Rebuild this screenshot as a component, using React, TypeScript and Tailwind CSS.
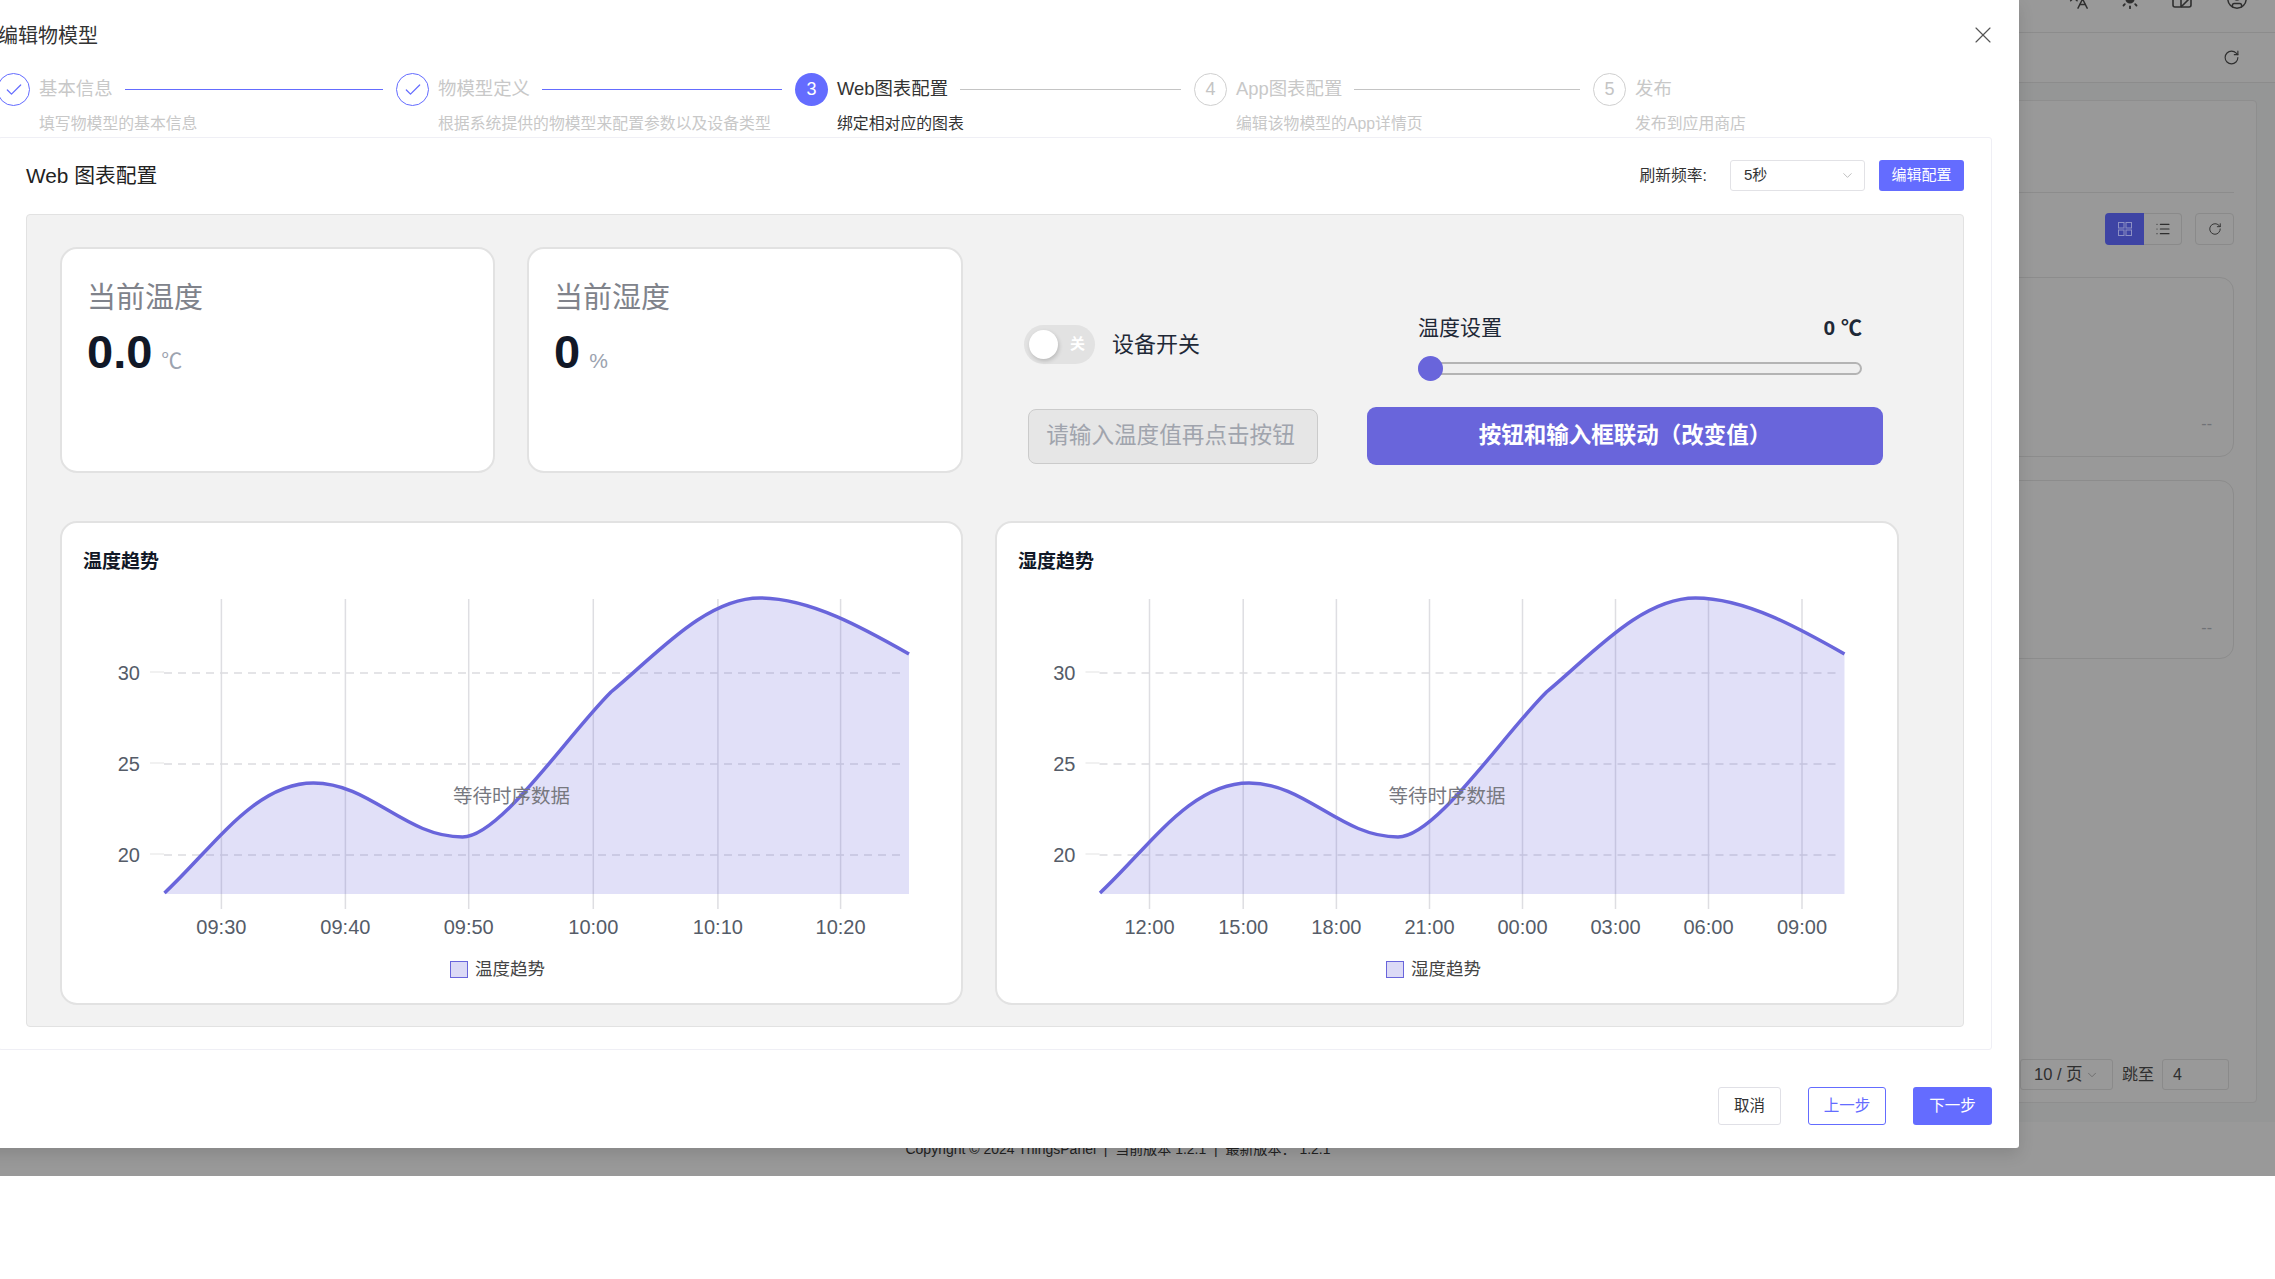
import { Check, ChevronDown, CircleUser, Languages, List, RotateCw, Sun, X } from "lucide-react"

const CURVE =
  "M103.5 370C153.5 323 194 260 252.5 260C309 260 344 314 401.5 314C439 314 505 214 550 169C594 133 644 75 699 75C749 75 804 106 848 131"

const steps = [
  { no: 1, title: "基本信息", desc: "填写物模型的基本信息", state: "done" },
  { no: 2, title: "物模型定义", desc: "根据系统提供的物模型来配置参数以及设备类型", state: "done" },
  { no: 3, title: "Web图表配置", desc: "绑定相对应的图表", state: "active" },
  { no: 4, title: "App图表配置", desc: "编辑该物模型的App详情页", state: "todo" },
  { no: 5, title: "发布", desc: "发布到应用商店", state: "todo" },
]

function Step({ step, last }: { step: (typeof steps)[number]; last: boolean }) {
  const done = step.state === "done"
  const active = step.state === "active"
  return (
    <div className="w-[399px] shrink-0">
      <div className="flex items-center h-[33px]">
        <div
          className={
            active
              ? "w-[33px] h-[33px] rounded-full bg-[#646cff] text-white flex items-center justify-center text-[18px] shrink-0"
              : done
                ? "w-[33px] h-[33px] rounded-full border border-[#646cff] text-[#646cff] flex items-center justify-center shrink-0"
                : "w-[33px] h-[33px] rounded-full border-[1.5px] border-[#cfcfcf] text-[#c4c4c4] flex items-center justify-center text-[18px] shrink-0"
          }
        >
          {done ? <Check size={20} strokeWidth={1.5} /> : step.no}
        </div>
        <div className={active ? "ml-[9px] -mt-[1px] text-[18.4px] text-[#333] whitespace-nowrap" : "ml-[9px] -mt-[1px] text-[18.4px] text-[#c8c8c8] whitespace-nowrap"}>
          {step.title}
        </div>
        {!last && (
          <div className={done ? "flex-1 h-[1.5px] ml-[12px] mr-[13px] bg-[#646cff]" : "flex-1 h-[1.5px] ml-[12px] mr-[13px] bg-[#c4c4c4]"} />
        )}
      </div>
      <div className={active ? "mt-[6px] pl-[42px] text-[15.85px] leading-[24px] text-[#333] whitespace-nowrap" : "mt-[6px] pl-[42px] text-[15.85px] leading-[24px] text-[#c8c8c8] whitespace-nowrap"}>
        {step.desc}
      </div>
    </div>
  )
}

function StatCard({ title, value, unit, className }: { title: string; value: string; unit: string; className: string }) {
  return (
    <div className={"h-[226px] shrink-0 bg-white rounded-[17px] border-2 border-[#e2e2e2] pl-[25px] pt-[29px] " + className}>
      <div className="text-[29px] leading-[40px] text-[#80838b]">{title}</div>
      <div className="mt-[6px] flex items-baseline">
        <span className="text-[47px] leading-[56px] font-bold text-[#111827]">{value}</span>
        <span className="ml-[9px] text-[21px] text-[#9ca3af]">{unit}</span>
      </div>
    </div>
  )
}

function ChartCard({
  title,
  ticks,
  className,
  legendPad,
}: {
  title: string
  ticks: { x: number; label: string }[]
  className: string
  legendPad: string
}) {
  return (
    <div className={"relative h-[484px] bg-white rounded-[17px] border-2 border-[#e2e2e2] pt-[26px] " + className}>
      <div className="pl-[21px] text-[19px] leading-[26px] font-bold text-[#111827]">{title}</div>
      <svg viewBox="1 52 899 378" className="block w-full h-[378px]">
        {ticks.map((t) => (
          <line key={t.label} x1={t.x} x2={t.x} y1={76} y2={386} stroke="#dedee2" strokeWidth={1.5} />
        ))}
        {[
          { y: 150, label: "30" },
          { y: 241, label: "25" },
          { y: 332, label: "20" },
        ].map((g) => (
          <g key={g.label}>
            <line x1={89} x2={103} y1={g.y - 1} y2={g.y - 1} stroke="#ececec" strokeWidth={1.5} />
            <line x1={103} x2={843} y1={g.y} y2={g.y} stroke="#dcdcdf" strokeWidth={1.5} strokeDasharray="8 6" />
            <text x={79} y={g.y + 7} textAnchor="end" fontSize={20} fill="#555c68">
              {g.label}
            </text>
          </g>
        ))}
        <path d={CURVE + "L848 371L103.5 371Z"} fill="#6965db" fillOpacity={0.2} />
        <path d={CURVE} fill="none" stroke="#6965db" strokeWidth={3.5} />
        {ticks.map((t) => (
          <text key={t.label} x={t.x} y={411} textAnchor="middle" fontSize={20} fill="#555c68">
            {t.label}
          </text>
        ))}
      </svg>
      <div className={"mt-[4px] flex items-center justify-center h-[24px] " + legendPad}>
        <div className="w-[18px] h-[17px] bg-[#dcdaf6] border-[1.5px] border-[#6965db]" />
        <span className="ml-[7px] text-[17.5px] text-[#444]">{title}</span>
      </div>
      <div className="absolute left-0 right-0 top-[259px] text-center text-[19.5px] leading-[28px] text-[#77787f]">等待时序数据</div>
    </div>
  )
}

function Backdrop() {
  return (
    <div className="h-[1176px] flex flex-col bg-[#999999] text-[#2f2f2f]">
      <div className="h-[33px] shrink-0 border-b border-[#8c8c8c] flex justify-end pr-[27px]">
        <div className="-mt-[12px] flex h-[22px]">
          <Languages size={22} strokeWidth={1.6} />
          <Sun size={22} strokeWidth={2} className="ml-[30px] fill-current" />
          <svg width="22" height="22" viewBox="0 0 22 22" fill="none" stroke="currentColor" strokeWidth="1.6" className="ml-[30px]">
            <rect x="2" y="2" width="18" height="17" rx="2" />
            <path d="M10 2V19M10 19L20 9" />
          </svg>
          <CircleUser size={22} strokeWidth={1.6} className="ml-[33px]" />
        </div>
      </div>
      <div className="h-[50px] shrink-0 border-b border-[#8c8c8c] flex items-center justify-end pr-[35px]">
        <RotateCw size={17} strokeWidth={1.6} />
      </div>
      <div className="flex-1 bg-[#959696] pt-[17px] pb-[19px] pl-[260px] pr-[18px]">
        <div className="h-full bg-[#999999] border border-[#8e8e8e] rounded-[4px] pt-[91px] pr-[22px] pb-[12px] flex flex-col">
          <div className="border-b border-[#8c8c8c]" />
          <div className="mt-[20px] flex justify-end">
            <div className="flex h-[32px]">
              <div className="w-[39px] bg-[#3e44a4] rounded-l-[4px] flex items-center justify-center">
                <svg width="14" height="14" viewBox="0 0 14 14" fill="none" stroke="#8d90c4" strokeWidth="1">
                  <rect x="0.5" y="0.5" width="5.5" height="5.5" />
                  <rect x="8" y="0.5" width="5.5" height="5.5" />
                  <rect x="0.5" y="8" width="5.5" height="5.5" />
                  <rect x="8" y="8" width="5.5" height="5.5" />
                </svg>
              </div>
              <div className="w-[38px] border border-l-0 border-[#8a8a8a] rounded-r-[4px] flex items-center justify-center">
                <List size={16} strokeWidth={1.7} />
              </div>
            </div>
            <div className="ml-[13px] w-[39px] h-[32px] border border-[#8a8a8a] rounded-[4px] flex items-center justify-center">
              <RotateCw size={14} strokeWidth={1.6} />
            </div>
          </div>
          <div className="mt-[32px] h-[180px] border border-[#8c8c8c] rounded-[14px] flex items-end justify-end pb-[20px] pr-[21px] text-[#707276] text-[16px] leading-[24px]">
            --
          </div>
          <div className="mt-[23px] h-[179px] border border-[#8c8c8c] rounded-[14px] flex items-end justify-end pb-[18px] pr-[21px] text-[#707276] text-[16px] leading-[24px]">
            --
          </div>
          <div className="mt-auto flex justify-end items-center text-[16px]">
            <div className="w-[93px] h-[31px] border border-[#8a8a8a] rounded-[3px] flex items-center pl-[13px] text-[16.5px]">
              10 / 页
              <ChevronDown size={14} strokeWidth={1.4} className="ml-[2px] text-[#666]" />
            </div>
            <span className="ml-[9px]">跳至</span>
            <div className="ml-[8px] mr-[5px] w-[67px] h-[31px] border border-[#8a8a8a] rounded-[3px] flex items-center pl-[10px]">4</div>
          </div>
        </div>
      </div>
      <div className="h-[54px] shrink-0 w-[2236px] flex items-center justify-center text-[14px] text-[#222]">
        Copyright © 2024 ThingsPanel&nbsp; |&nbsp; 当前版本 1.2.1&nbsp; |&nbsp; 最新版本： 1.2.1
      </div>
    </div>
  )
}

export default function App() {
  return (
    <div className="relative w-[2275px] h-[1279px] overflow-hidden bg-white font-['Liberation_Sans','Noto_Sans_CJK_SC',sans-serif]">
      <Backdrop />

      <div className="absolute left-[-26px] top-0 w-[2045px] h-[1148px] bg-white rounded-br-[3px] shadow-[0_6px_16px_rgba(0,0,0,0.12)] pl-[24px] pr-[27px] pt-[22px]">
        <div className="flex items-center justify-between h-[28px]">
          <div className="text-[20px] leading-[28px] text-[#333]">编辑物模型</div>
          <X size={28} strokeWidth={1} className="text-[#555] -mr-[5px] -mt-[2px]" />
        </div>

        <div className="mt-[23px] flex ml-[-1px]">
          {steps.map((s, i) => (
            <Step key={s.no} step={s} last={i === steps.length - 1} />
          ))}
        </div>

        <div className="mt-[1px] h-[913px] border border-[#efeff5] rounded-[3px] px-[27px] pt-[22px]">
          <div className="flex items-center justify-between h-[31px]">
            <div className="text-[20.8px] text-[#222]">Web 图表配置</div>
            <div className="flex items-center">
              <span className="text-[15.8px] text-[#333]">刷新频率:</span>
              <div className="ml-[23px] w-[135px] h-[31px] border-[1.5px] border-[#e2e2e6] rounded-[3px] flex items-center justify-between pl-[13px] pr-[9px] text-[15px] text-[#333]">
                5秒
                <ChevronDown size={15} strokeWidth={1.2} className="text-[#aaa]" />
              </div>
              <div className="ml-[14px] w-[85px] h-[31px] bg-[#646cff] rounded-[3px] flex items-center justify-center text-[15px] text-white">编辑配置</div>
            </div>
          </div>

          <div className="mt-[23px] h-[813px] bg-[#f2f2f2] border border-[#e2e2e2] rounded-[4px] pl-[33px] pt-[32px]">
            <div className="flex">
              <StatCard title="当前温度" value="0.0" unit="℃" className="w-[435px]" />
              <StatCard title="当前湿度" value="0" unit="%" className="ml-[32px] w-[436px]" />

              <div className="pl-[61px] pt-[66px]">
                <div className="flex items-start h-[68px]">
                  <div className="w-[394px] mt-[12px] flex items-center">
                    <div className="w-[71px] h-[39px] rounded-full bg-[#e2e2e2] flex items-center pl-[5px]">
                      <div className="w-[29px] h-[29px] rounded-full bg-white shadow-[1px_2px_4px_rgba(0,0,0,0.18)]" />
                      <span className="ml-[12px] text-[15px] font-bold text-white">关</span>
                    </div>
                    <span className="ml-[17px] text-[22px] text-[#1f2937]">设备开关</span>
                  </div>
                  <div className="w-[444px]">
                    <div className="flex justify-between items-center h-[30px] text-[21px] text-[#1f2937]">
                      <span>温度设置</span>
                      <span className="font-bold text-[#1f2937]">0 ℃</span>
                    </div>
                    <div className="relative mt-[13px] h-[25px] flex items-center">
                      <div className="w-full h-[13px] rounded-full bg-[#efefef] border-2 border-[#b4b4b4]" />
                      <div className="absolute left-0 top-0 w-[25px] h-[25px] rounded-full bg-[#6965db]" />
                    </div>
                  </div>
                </div>
                <div className="mt-[26px] flex items-center">
                  <div className="ml-[4px] w-[290px] h-[55px] bg-[#e6e6e6] border-[1.5px] border-[#cbcbcb] rounded-[8px] flex items-center justify-center pr-[5px] text-[22.6px] text-[#a0a4ad]">
                    请输入温度值再点击按钮
                  </div>
                  <div className="ml-[49px] w-[516px] h-[58px] bg-[#6965db] rounded-[9px] flex items-center justify-center text-[22.5px] font-bold text-white">
                    按钮和输入框联动（改变值）
                  </div>
                </div>
              </div>
            </div>

            <div className="mt-[48px] flex">
              <ChartCard
                title="温度趋势"
                className="w-[903px]"
                legendPad="pr-[28px]"
                ticks={[
                  { x: 160.4, label: "09:30" },
                  { x: 284.4, label: "09:40" },
                  { x: 407.7, label: "09:50" },
                  { x: 532.3, label: "10:00" },
                  { x: 656.9, label: "10:10" },
                  { x: 779.6, label: "10:20" },
                ]}
              />
              <ChartCard
                title="湿度趋势"
                className="ml-[32px] w-[904px]"
                legendPad="pr-[27px]"
                ticks={[
                  { x: 153, label: "12:00" },
                  { x: 246.7, label: "15:00" },
                  { x: 339.9, label: "18:00" },
                  { x: 433, label: "21:00" },
                  { x: 526, label: "00:00" },
                  { x: 619, label: "03:00" },
                  { x: 712, label: "06:00" },
                  { x: 805.5, label: "09:00" },
                ]}
              />
            </div>
          </div>
        </div>

        <div className="mt-[37px] flex justify-end">
          <div className="w-[63px] h-[38px] border-[1.5px] border-[#e0e0e6] rounded-[3px] flex items-center justify-center text-[15.5px] text-[#333]">取消</div>
          <div className="ml-[27px] w-[78px] h-[38px] border-[1.5px] border-[#646cff] rounded-[3px] flex items-center justify-center text-[15.5px] text-[#646cff]">上一步</div>
          <div className="ml-[27px] w-[79px] h-[38px] bg-[#646cff] rounded-[3px] flex items-center justify-center text-[15.5px] text-white">下一步</div>
        </div>
      </div>
    </div>
  )
}
